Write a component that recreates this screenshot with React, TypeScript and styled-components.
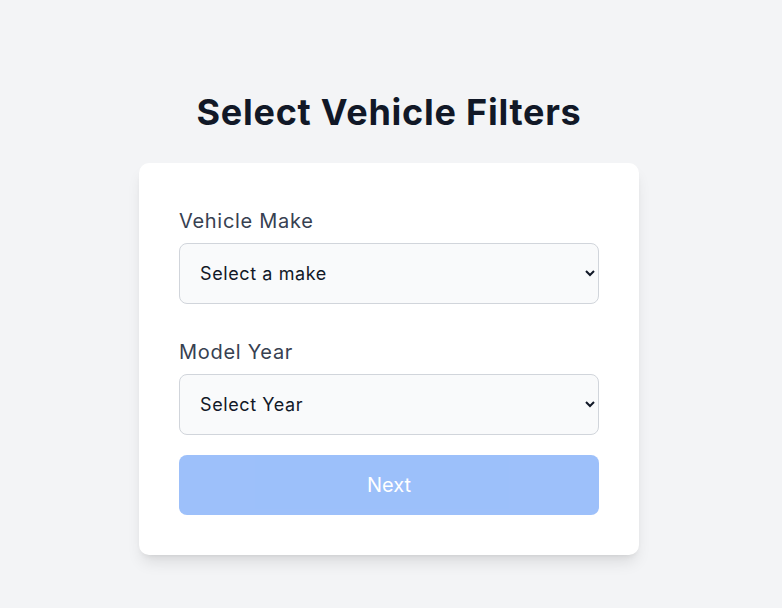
import React from "react";
import styled, { createGlobalStyle } from "styled-components";

const Global = createGlobalStyle`
  html, body { margin: 0; padding: 0; background: #f3f4f6; }
  body { font-family: Inter, "Noto Sans", sans-serif; color: #111827; }
  * { box-sizing: border-box; }
`;

const Page = styled.main`
  display: flex;
  flex-direction: column;
  align-items: center;
  padding-top: 92px;
  padding-right: 4px;
  min-height: 100vh;
`;

const Title = styled.h1`
  margin: 0 0 31px;
  font-size: 36px;
  line-height: 40px;
  font-weight: 700;
  color: #111827;
  letter-spacing: 0.75px;
`;

const Card = styled.form`
  width: 500px;
  background: #ffffff;
  border-radius: 10px;
  padding: 40px;
  box-shadow: 0 10px 15px -3px rgba(0, 0, 0, 0.1), 0 4px 6px -4px rgba(0, 0, 0, 0.1);
  display: flex;
  flex-direction: column;
`;

const Field = styled.div<{ $gap: number }>`
  display: flex;
  flex-direction: column;
  margin-bottom: ${(p) => p.$gap}px;
`;

const Label = styled.label`
  font-size: 20px;
  line-height: 28px;
  color: #374151;
  margin-top: 4px;
  margin-bottom: 8px;
  letter-spacing: 0.7px;
`;

const Select = styled.select`
  height: 61px;
  width: 100%;
  padding: 0 16px 0 16px;
  border: 1px solid #d1d5db;
  border-radius: 8px;
  background-color: #f9fafb;
  font-family: inherit;
  font-size: 18px;
  letter-spacing: 0.6px;
  color: #111827;
  outline: none;
`;

const Button = styled.button`
  height: 60px;
  width: 100%;
  border: none;
  border-radius: 8px;
  background: #3b82f6;
  opacity: 0.5;
  color: #ffffff;
  font-family: inherit;
  font-size: 20px;
  cursor: not-allowed;
`;

export default function App() {
  return (
    <>
      <Global />
      <Page>
        <Title>Select Vehicle Filters</Title>
        <Card onSubmit={(e) => e.preventDefault()}>
          <Field $gap={30}>
            <Label htmlFor="make">Vehicle Make</Label>
            <Select id="make" defaultValue="">
              <option value="">Select a make</option>
            </Select>
          </Field>
          <Field $gap={20}>
            <Label htmlFor="year">Model Year</Label>
            <Select id="year" defaultValue="">
              <option value="">Select Year</option>
            </Select>
          </Field>
          <Button type="submit" disabled>
            Next
          </Button>
        </Card>
      </Page>
    </>
  );
}
